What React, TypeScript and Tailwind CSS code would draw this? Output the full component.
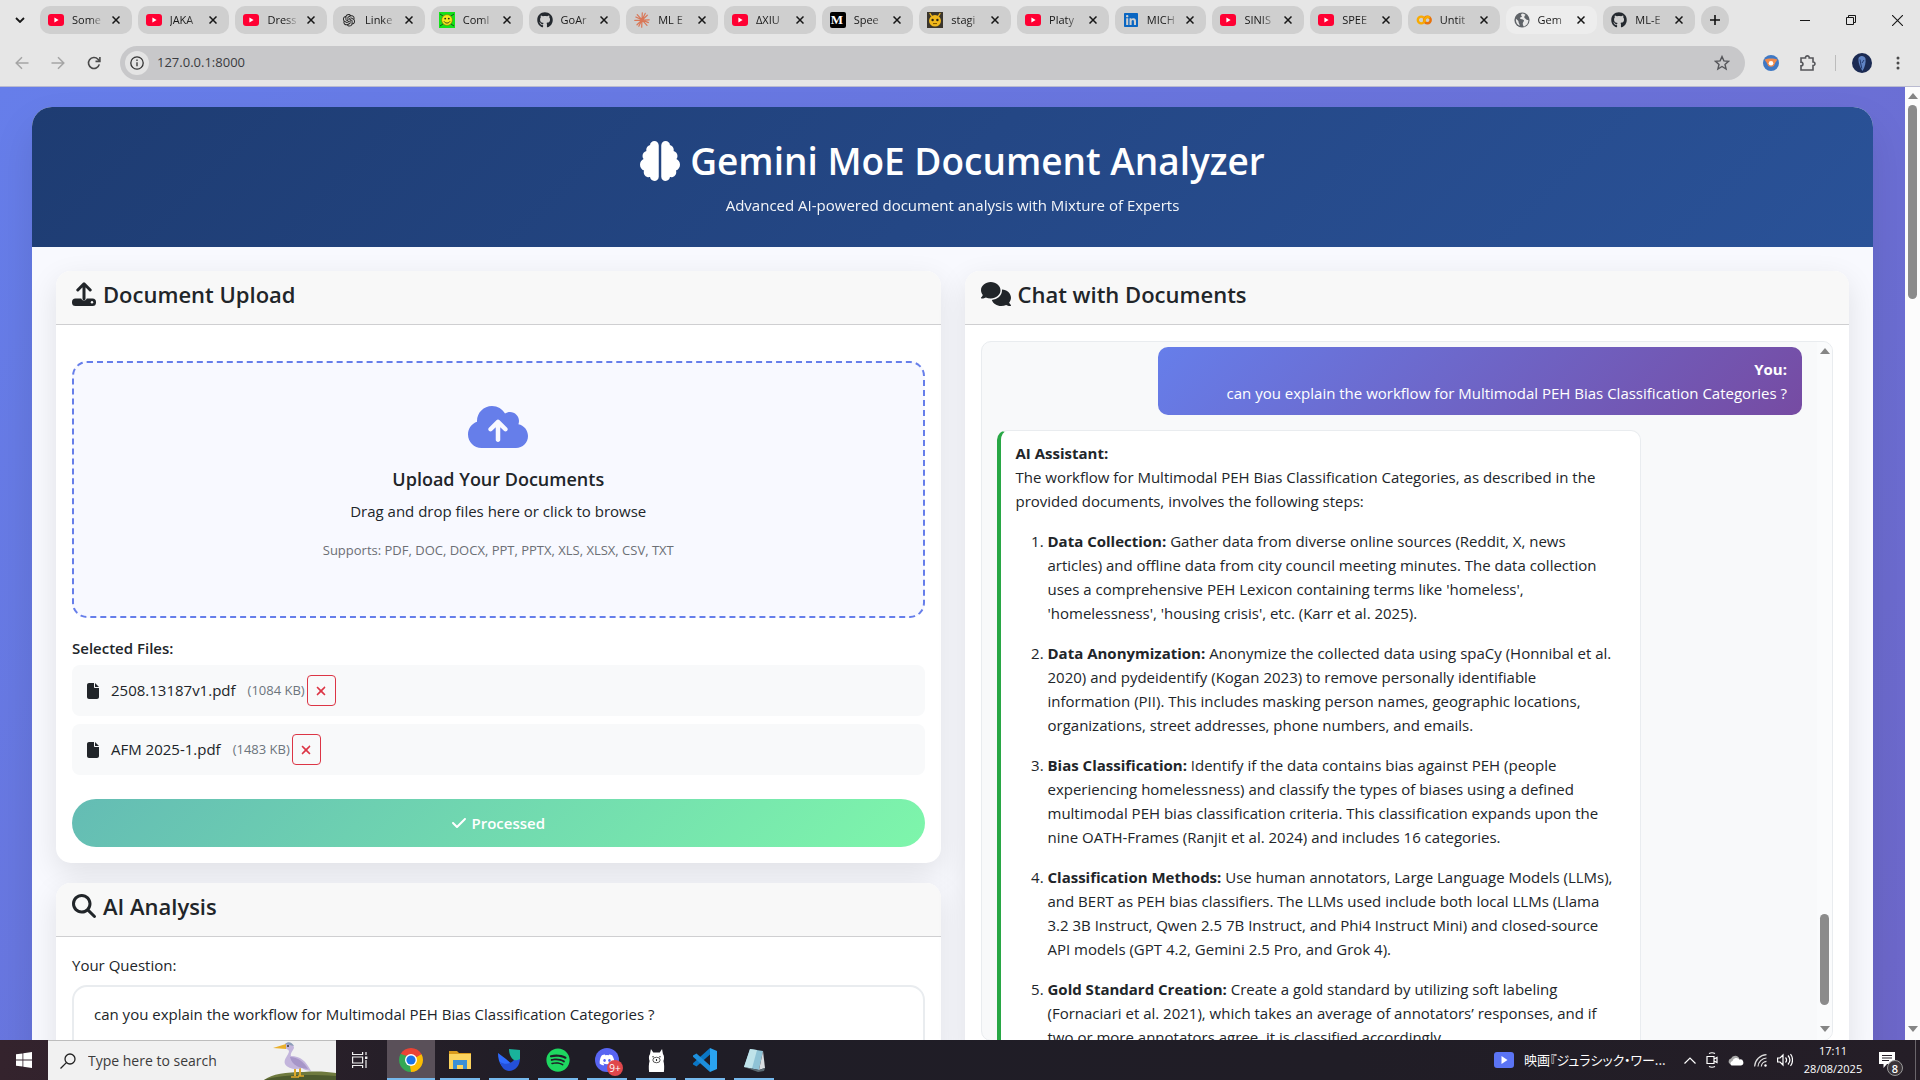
import type { ReactNode } from "react";
import {
  FaBrain,
  FaCheck,
  FaCloudArrowUp,
  FaComments,
  FaDiscord,
  FaFile,
  FaGithub,
  FaLinkedin,
  FaMagnifyingGlass,
  FaSpotify,
  FaXmark,
} from "react-icons/fa6";
import { AiOutlineOpenAI } from "react-icons/ai";

/* ---------- favicons ---------- */

const YouTube = () => (
  <svg viewBox="0 0 16 16" className="size-4">
    <rect x="0" y="2" width="16" height="12" rx="3" fill="#ff0033" />
    <path d="M6.4 5.6v4.8L10.6 8z" fill="#fff" />
  </svg>
);

const Smiley = () => (
  <svg viewBox="0 0 16 16" className="size-4">
    <rect width="16" height="16" fill="#14e21a" />
    <path d="M1 2l3 2M15 2l-3 2M1 14l3-2M15 14l-3-2" stroke="#222" strokeWidth="0.8" />
    <circle cx="8" cy="8" r="5.4" fill="#f6ea1c" stroke="#7a6a00" strokeWidth="0.6" />
    <circle cx="6.2" cy="6.6" r="0.9" fill="#222" />
    <circle cx="9.8" cy="6.6" r="0.9" fill="#222" />
    <path d="M5 9.4c1.4 2.2 4.600 2.200 6 0" fill="none" stroke="#222" strokeWidth="0.9" />
  </svg>
);

const Burst = () => (
  <svg viewBox="0 0 16 16" className="size-4" stroke="#d97757" strokeWidth="1.2" strokeLinecap="round">
    <path d="M8.300.8L7.700 15.200M.8 8.400l14.400-.6M3.200 2.600l9.800 10.800M13.300 3.200L3 12.800M4.800 14.200L11.200 1.400M1.800 5l12.600 5.600" />
  </svg>
);

const Medium = () => (
  <span className="flex size-4 items-center overflow-hidden rounded-xs bg-black pl-px font-['Liberation_Serif',serif] text-[13px] leading-4 font-bold text-white">
    M
  </span>
);

const Bee = () => (
  <svg viewBox="0 0 16 16" className="size-4">
    <rect width="16" height="16" fill="#3a352c" />
    <path d="M4.500 4L3 1.500M11.500 4L13 1.500" stroke="#f0b81c" strokeWidth="1.400" strokeLinecap="round" />
    <ellipse cx="8" cy="8.800" rx="6" ry="5.800" fill="#f0b81c" />
    <circle cx="5.600" cy="8" r="1.200" fill="#2a2417" />
    <circle cx="10.400" cy="8" r="1.200" fill="#2a2417" />
    <path d="M6 11.600h4" stroke="#7a5200" strokeWidth="1" />
  </svg>
);

const Colab = () => (
  <svg viewBox="0 0 16 16" className="size-4" fill="none" strokeWidth="2.400">
    <path d="M7.600 10.400A3.400 3.400 0 1 1 7.600 5.600" stroke="#f9ab00" />
    <circle cx="11.400" cy="8" r="3.300" stroke="#e8710a" />
    <path d="M9.100 10.300a3.300 3.300 0 0 1 4.600-4.600" stroke="#f9ab00" />
  </svg>
);

const Globe = () => (
  <svg viewBox="0 0 16 16" className="size-4">
    <circle cx="8" cy="8" r="7.600" fill="#5f6368" />
    <path d="M8.600 1.600c-1.600.4-2 1.600-1 2.400.8.7-.2 1.300-1.200 1.500-.9.200-.6 1.300.4 1.400 1.600.1 3 .5 3.200 1.700.2 1.100-1 1.400-1.200 2.600-.2 1.300.2 2.400 1 3.200 2.800-.6 4.700-3.300 4.600-6.400-1.200.3-2-.2-2.600-1.100-.6-.9-1.600-.8-1.500-1.900.1-1 .8-1.400 1.300-1.900-.7-.8-1.900-1.400-3-1.500zM2 6.800c-.5 3 .9 5.900 3.600 7 .2-1.200-.3-1.700-.7-2.600-.5-1.200-.2-2-1-2.800z" fill="#e8e8e8" />
  </svg>
);

const GitHub = () => <FaGithub className="size-4 text-[#24292f]" />;

type TabData = { label: string; icon: ReactNode; active?: boolean };

const tabs: TabData[] = [
  { label: "Some", icon: <YouTube /> },
  { label: "JAKA", icon: <YouTube /> },
  { label: "Dress", icon: <YouTube /> },
  { label: "Linke", icon: <AiOutlineOpenAI className="size-4 text-neutral-800" /> },
  { label: "Coml", icon: <Smiley /> },
  { label: "GoAr", icon: <GitHub /> },
  { label: "ML E", icon: <Burst /> },
  { label: "ΔXIU", icon: <YouTube /> },
  { label: "Spee", icon: <Medium /> },
  { label: "stagi", icon: <Bee /> },
  { label: "Platy", icon: <YouTube /> },
  { label: "MICH", icon: <FaLinkedin className="size-4 text-[#0a66c2]" /> },
  { label: "SINIS", icon: <YouTube /> },
  { label: "SPEE", icon: <YouTube /> },
  { label: "Untit", icon: <Colab /> },
  { label: "Gem", icon: <Globe />, active: true },
  { label: "ML-E", icon: <GitHub /> },
];

const Cross = ({ className = "size-2" }: { className?: string }) => (
  <svg viewBox="0 0 8 8" className={className} stroke="currentColor" strokeWidth="1.500" fill="none">
    <path d="M.5.5l7 7M7.500.5l-7 7" />
  </svg>
);

function Tab({ label, icon, active }: TabData) {
  return (
    <div className={`flex h-7 min-w-0 flex-1 items-center rounded-[10px] px-2 ${active ? "bg-[#ededed]" : "bg-[#cfcfcf]"}`}>
      <span className="flex size-4 shrink-0">{icon}</span>
      <span className="ml-2 w-8 text-[11px] whitespace-nowrap text-neutral-900 [mask-image:linear-gradient(to_right,black_55%,transparent)]">
        {label}
      </span>
      <button aria-label={`Close ${label}`} className="ml-auto flex size-4 shrink-0 items-center justify-center text-neutral-900">
        <Cross />
      </button>
    </div>
  );
}

function BrowserChrome() {
  return (
    <header className="shrink-0 border-b border-[#b9bad0] bg-[#e6e6e6]">
      <div className="flex h-10 items-center">
        <button aria-label="Search tabs" className="flex w-10 shrink-0 items-center justify-center text-neutral-900">
          <svg viewBox="0 0 10 6" className="h-[6px] w-[10px]" fill="none" stroke="currentColor" strokeWidth="1.800">
            <path d="M1 1l4 4 4-4" />
          </svg>
        </button>
        <nav aria-label="Tabs" className="flex max-w-[1655px] min-w-0 flex-1 gap-1.5">
          {tabs.map((t, i) => (
            <Tab key={i} {...t} />
          ))}
        </nav>
        <button aria-label="New tab" className="ml-1.5 flex size-7 shrink-0 items-center justify-center rounded-full bg-[#cfcfcf]">
          <svg viewBox="0 0 10 10" className="size-2.5" stroke="#111" strokeWidth="1.600">
            <path d="M5 0v10M0 5h10" />
          </svg>
        </button>
        <div className="ml-auto flex shrink-0 text-neutral-900">
          <button aria-label="Minimize" className="flex w-[46px] items-center justify-center">
            <svg viewBox="0 0 10 10" className="size-2.5" stroke="currentColor">
              <path d="M0 5.500h10" />
            </svg>
          </button>
          <button aria-label="Restore" className="flex w-[46px] items-center justify-center">
            <svg viewBox="0 0 10 10" className="size-2.5" stroke="currentColor" fill="none">
              <path d="M.5 2.500h7v7h-7zM2.500 2V.500h7v7H8" />
            </svg>
          </button>
          <button aria-label="Close window" className="flex w-[46px] items-center justify-center">
            <svg viewBox="0 0 10 10" className="size-[11px]" stroke="currentColor">
              <path d="M0 0l10 10M10 0L0 10" />
            </svg>
          </button>
        </div>
      </div>
      <div className="flex h-[46px] items-center">
        <div className="flex w-[120px] shrink-0 items-center justify-around pr-2 pl-1">
          <button aria-label="Back" className="text-[#a5a5a5]">
            <svg viewBox="0 0 14 14" className="size-3.5" fill="none" stroke="currentColor" strokeWidth="1.500">
              <path d="M13.500 7H1.500M7 1.200L1.200 7 7 12.800" />
            </svg>
          </button>
          <button aria-label="Forward" className="text-[#a5a5a5]">
            <svg viewBox="0 0 14 14" className="size-3.5" fill="none" stroke="currentColor" strokeWidth="1.500">
              <path d="M.5 7h12M7 1.200L12.800 7 7 12.800" />
            </svg>
          </button>
          <button aria-label="Reload" className="text-[#4a4a4a]">
            <svg viewBox="0 0 14 14" className="size-3.5" fill="none" stroke="currentColor" strokeWidth="1.600">
              <path d="M12.300 8.400A5.500 5.500 0 1 1 11 3.200L12.500 5" />
              <path d="M12.900 1v4.400H8.500" />
            </svg>
          </button>
        </div>
        <div className="flex h-[34px] flex-1 items-center rounded-full bg-[#c8c8ca] px-[5px]">
          <span className="flex size-6 items-center justify-center rounded-full bg-[#e4e4e4]">
            <svg viewBox="0 0 14 14" className="size-3.5" fill="none" stroke="#333" strokeWidth="1.300">
              <circle cx="7" cy="7" r="6.200" />
              <path d="M7 6.200v4M7 3.600v1.400" />
            </svg>
          </span>
          <input
            aria-label="Address"
            defaultValue="127.0.0.1:8000"
            className="ml-2 min-w-0 flex-1 bg-transparent text-[13px] text-[#3a3b40] outline-none"
          />
          <button aria-label="Bookmark this page" className="mr-2.5">
            <svg viewBox="0 0 16 16" className="size-4" fill="none" stroke="#55565a" strokeWidth="1.400">
              <path d="M8 1.600l1.900 4.300 4.600.4-3.500 3.100 1.100 4.600L8 11.500 3.900 14 5 9.400 1.500 6.300l4.600-.4z" />
            </svg>
          </button>
        </div>
        <div className="flex items-center pl-[18px]">
          <button aria-label="Extension">
            <svg viewBox="0 0 16 16" className="size-4">
              <circle cx="8" cy="8" r="8" fill="#3f78c4" />
              <path d="M1.500 4.500c3-1.500 10-1.500 13 0L10.800 10H5.200z" fill="#f08a4b" />
              <circle cx="8" cy="8.200" r="3.600" fill="#f08a4b" />
              <circle cx="8" cy="8.200" r="2.300" fill="#fff" />
            </svg>
          </button>
          <button aria-label="Extensions" className="ml-5">
            <svg viewBox="0 0 18 18" className="size-[18px]" fill="none" stroke="#55565a" strokeWidth="1.600">
              <path d="M2 4h4.500c-.3-2.800 4-2.800 3.700 0H14v4c2.600-.2 2.600 3.700 0 3.500V16H2v-4.200c2.600 0 2.600-3.700 0-3.700z" />
            </svg>
          </button>
          <span className="ml-[18px] h-4 w-px bg-[#bcbcbc]" />
          <button aria-label="Profile" className="ml-4">
            <svg viewBox="0 0 20 20" className="size-5">
              <circle cx="10" cy="10" r="10" fill="#1b2a52" />
              <path d="M6.500 5c2-3 6-2.500 7 .500.6 3.500-.6 9-3 12.500C8 14.500 6 9 6.500 5z" fill="#5f83c4" />
              <path d="M8 6.500c.8 3 .8 6 1.800 9M12 7l-2 3" stroke="#24386c" strokeWidth="1" fill="none" />
            </svg>
          </button>
          <button aria-label="Menu" className="mr-5 ml-6">
            <svg viewBox="0 0 4 16" className="h-4 w-1" fill="#4a4a4a">
              <circle cx="2" cy="3" r="1.500" />
              <circle cx="2" cy="8" r="1.500" />
              <circle cx="2" cy="13" r="1.500" />
            </svg>
          </button>
        </div>
      </div>
    </header>
  );
}

/* ---------- scrollbars ---------- */

const Arrow = ({ down }: { down?: boolean }) => (
  <svg viewBox="0 0 10 6" className="h-1.5 w-2.5 shrink-0" fill="#858585">
    <path d={down ? "M0 0h10L5 6z" : "M0 6h10L5 0z"} />
  </svg>
);

/* ---------- page ---------- */

const UploadIcon = () => (
  <svg viewBox="0 0 24 24" className="size-6" fill="none" stroke="currentColor">
    <path d="M3.500 16.500h5.700a2.900 2.900 0 0 0 5.600 0h5.700a3.500 3.500 0 0 1 3.500 3.500v.5a3.500 3.500 0 0 1-3.500 3.500h-17A3.500 3.500 0 0 1 0 20.500V20a3.500 3.500 0 0 1 3.500-3.500z" fill="currentColor" stroke="none" />
    <circle cx="20" cy="20.300" r="1.200" fill="#f8f8f8" stroke="none" />
    <path d="M12 17V2.500M5.800 8L12 1.800 18.200 8" strokeWidth="3" strokeLinecap="round" strokeLinejoin="round" />
  </svg>
);

function Card({ icon, title, children }: { icon: ReactNode; title: string; children: ReactNode }) {
  return (
    <section className="rounded-[15px] bg-white shadow-[0_10px_30px_rgba(0,0,0,0.1)]">
      <div className="flex h-[54px] items-start rounded-t-[15px] border-b border-[#cfcfd1] bg-[#f8f8f8] px-4 pt-2">
        <h2 className="flex items-center gap-[7px] text-[22px] leading-[30px] font-semibold text-[#212529]">
          {icon}
          {title}
        </h2>
      </div>
      <div className="p-4">{children}</div>
    </section>
  );
}

const files = [
  { name: "2508.13187v1.pdf", size: "(1084 KB)" },
  { name: "AFM 2025-1.pdf", size: "(1483 KB)" },
];

function UploadCard() {
  return (
    <Card icon={<UploadIcon />} title="Document Upload">
      <button className="mt-5 mb-5 flex h-[257px] w-full flex-col items-center rounded-[15px] border-2 border-dashed border-[#667eea] bg-[#f8f9ff] pt-10">
        <FaCloudArrowUp className="h-12 w-[60px] text-[#667eea]" />
        <span className="mt-4 text-[18px] leading-6 font-semibold">Upload Your Documents</span>
        <span className="mt-2 text-[15px] leading-6">Drag and drop files here or click to browse</span>
        <span className="mt-4 text-[13px] leading-[22px] text-[#6c6f75]">
          Supports: PDF, DOC, DOCX, PPT, PPTX, XLS, XLSX, CSV, TXT
        </span>
      </button>
      <h3 className="mb-[7px] text-[15px] leading-5 font-semibold">Selected Files:</h3>
      <ul className="flex flex-col gap-2">
        {files.map((f) => (
          <li key={f.name} className="flex h-[51px] items-center rounded-lg bg-[#f8f9fa] pl-[15px]">
            <FaFile className="h-4 w-3" />
            <span className="ml-3 text-[15px]">{f.name}</span>
            <span className="ml-3 text-[13px] text-[#6c757d]">{f.size}</span>
            <button
              aria-label={`Remove ${f.name}`}
              className="ml-0.5 flex h-[31px] w-[29px] items-center justify-center rounded-sm border border-[#dc3545] text-[#dc3545]"
            >
              <FaXmark className="size-3.5" />
            </button>
          </li>
        ))}
      </ul>
      <button className="mt-6 flex h-12 w-full items-center justify-center gap-1 rounded-full bg-[linear-gradient(135deg,#64bcb4,#7ef6ab)] text-[15px] font-semibold text-white">
        <FaCheck className="size-4" />
        Processed
      </button>
    </Card>
  );
}

function AnalysisCard() {
  return (
    <Card icon={<FaMagnifyingGlass className="size-6" />} title="AI Analysis">
      <label htmlFor="question" className="mb-2 block text-[15px] leading-6">
        Your Question:
      </label>
      <textarea
        id="question"
        rows={4}
        defaultValue="can you explain the workflow for Multimodal PEH Bias Classification Categories ?"
        className="block w-full resize-none rounded-[15px] border-2 border-[#e9ecef] bg-white px-5 py-[15px] text-[15px] leading-6 outline-none"
      />
    </Card>
  );
}

const steps: { term: string; lines: string[] }[] = [
  {
    term: "Data Collection:",
    lines: [
      "Gather data from diverse online sources (Reddit, X, news",
      "articles) and offline data from city council meeting minutes. The data collection",
      "uses a comprehensive PEH Lexicon containing terms like 'homeless',",
      "'homelessness', 'housing crisis', etc. (Karr et al. 2025).",
    ],
  },
  {
    term: "Data Anonymization:",
    lines: [
      "Anonymize the collected data using spaCy (Honnibal et al.",
      "2020) and pydeidentify (Kogan 2023) to remove personally identifiable",
      "information (PII). This includes masking person names, geographic locations,",
      "organizations, street addresses, phone numbers, and emails.",
    ],
  },
  {
    term: "Bias Classification:",
    lines: [
      "Identify if the data contains bias against PEH (people",
      "experiencing homelessness) and classify the types of biases using a defined",
      "multimodal PEH bias classification criteria. This classification expands upon the",
      "nine OATH-Frames (Ranjit et al. 2024) and includes 16 categories.",
    ],
  },
  {
    term: "Classification Methods:",
    lines: [
      "Use human annotators, Large Language Models (LLMs),",
      "and BERT as PEH bias classifiers. The LLMs used include both local LLMs (Llama",
      "3.2 3B Instruct, Qwen 2.5 7B Instruct, and Phi4 Instruct Mini) and closed-source",
      "API models (GPT 4.2, Gemini 2.5 Pro, and Grok 4).",
    ],
  },
  {
    term: "Gold Standard Creation:",
    lines: [
      "Create a gold standard by utilizing soft labeling",
      "(Fornaciari et al. 2021), which takes an average of annotators’ responses, and if",
      "two or more annotators agree, it is classified accordingly.",
    ],
  },
];

function ChatCard() {
  return (
    <Card icon={<FaComments className="h-6 w-[30px]" />} title="Chat with Documents">
      <div className="flex h-[700px] overflow-hidden rounded-[10px] border border-[#e9ecef] bg-[#f8f9fa]">
        <div className="flex min-w-0 flex-1 flex-col gap-[15px] overflow-hidden px-[15px] pt-[5px] text-[15px] leading-6">
          <div className="flex h-[68px] w-4/5 shrink-0 flex-col justify-center self-end rounded-[10px] bg-[linear-gradient(135deg,#667eea,#764ba2)] px-[15px] text-right text-white">
            <strong className="font-bold">You:</strong>
            <span>can you explain the workflow for Multimodal PEH Bias Classification Categories ?</span>
          </div>
          <div className="w-4/5 shrink-0 rounded-[10px] border border-l-4 border-[#e9ecef] border-l-[#28a745] bg-white px-[15px] py-2.5 whitespace-nowrap">
            <strong className="font-bold">AI Assistant:</strong>
            <p>
              The workflow for Multimodal PEH Bias Classification Categories, as described in the
              <br />
              provided documents, involves the following steps:
            </p>
            <ol className="mt-4 flex list-decimal flex-col gap-4 pl-8">
              {steps.map((s) => (
                <li key={s.term}>
                  <strong className="font-bold">{s.term}</strong>{" "}
                  {s.lines.map((l, i) => (
                    <span key={l}>
                      {i > 0 && <br />}
                      {l}
                    </span>
                  ))}
                </li>
              ))}
            </ol>
          </div>
        </div>
        <div className="flex w-[15px] shrink-0 flex-col items-center bg-[#fafbfc] pt-1.5 pb-2">
          <Arrow />
          <span className="mt-auto h-[91px] w-[9px] rounded-full bg-[#8b8b8b]" />
          <span className="h-[21px]" />
          <Arrow down />
        </div>
      </div>
    </Card>
  );
}

/* ---------- taskbar ---------- */

const ChromeLogo = () => (
  <svg viewBox="0 0 24 24" className="size-6">
    <path d="M12 12L1.610 6A12 12 0 0 1 22.390 6z" fill="#ea4335" />
    <path d="M12 12L22.390 6A12 12 0 0 1 12 24z" fill="#fbbc04" />
    <path d="M12 12v12A12 12 0 0 1 1.610 6z" fill="#34a853" />
    <path d="M12 6h10.390L17.200 9z" fill="#ea4335" />
    <path d="M17.200 15L12 24l-1-6z" fill="#fbbc04" />
    <path d="M6.800 15L1.610 6 8 8z" fill="#34a853" />
    <circle cx="12" cy="12" r="6" fill="#fff" />
    <circle cx="12" cy="12" r="4.600" fill="#1a73e8" />
  </svg>
);

const Explorer = () => (
  <svg viewBox="0 0 24 24" className="size-6">
    <path d="M1 3h8l2 2h12v4H1z" fill="#d99a1c" />
    <path d="M1 6h22v15H1z" fill="#fbd35e" />
    <path d="M5 12h14v9h-4v-4H9v4H5z" fill="#3b8fd6" />
  </svg>
);

const Wave = () => (
  <svg viewBox="0 0 24 24" className="size-6">
    <path d="M1 5l8 6 8 7c-3 4-9 4-12 0C2 15 1 10 1 5z" fill="#2f6bff" />
    <path d="M3 14c5 3 11 2 14-2l6-2c0 8-5 13-11 13-4 0-8-4-9-9z" fill="#2450d8" />
    <path d="M12 1c4 0 8 1 11 1v9c-3 2-6 1-6 1-3-2-5-6-5-11z" fill="#19b39b" />
  </svg>
);

const Discord = () => (
  <span className="relative flex size-6 items-center justify-center rounded-full bg-[#5865f2]">
    <FaDiscord className="size-4 text-white" />
    <span className="absolute -right-1 -bottom-1 flex size-4 items-center justify-center rounded-full bg-[#e0474c] text-[10px] leading-none text-white">
      9+
    </span>
  </span>
);

const Llama = () => (
  <svg viewBox="0 0 18 26" className="h-6 w-[17px]">
    <path d="M3 1l2.500 4h7L15 1l1 5.500c1.500 2 1.500 5 .500 7.500 1 3 1 8 .500 12H1c-.500-4-.500-9 .500-12-1-2.500-1-5.500.500-7.500z" fill="#fff" />
    <ellipse cx="9" cy="13" rx="4" ry="3" fill="none" stroke="#222" strokeWidth="0.800" />
    <path d="M9 12v2M4.500 9.500h1.500M12 9.500h1.500" stroke="#222" strokeWidth="1.200" />
  </svg>
);

const VSCode = () => (
  <svg viewBox="0 0 24 24" className="size-6">
    <path d="M17 0l7 3v18l-7 3z" fill="#2aa3ef" />
    <path d="M17 0v6.500L3.500 18.500 0 16.500v-1.200z" fill="#0b76c4" />
    <path d="M17 24v-6.500L3.500 5.500 0 7.500v1.200z" fill="#1d8fdc" />
  </svg>
);

const Notepad = () => (
  <svg viewBox="0 0 24 24" className="size-6">
    <path d="M8 1l13 2-4 19-15-3z" fill="#8fc3d6" />
    <path d="M8 1l7 1-5 18.500-8-1.500z" fill="#bfe3ea" />
    <path d="M21 3l2 17-6 2z" fill="#d8dde0" />
    <path d="M2 19l15 3 6-2-1 3-6 1z" fill="#5b6a72" />
  </svg>
);

const apps = [
  { name: "File Explorer", icon: <Explorer /> },
  { name: "Wave", icon: <Wave /> },
  { name: "Spotify", icon: <FaSpotify className="size-6 text-[#1ed760]" /> },
  { name: "Discord", icon: <Discord /> },
  { name: "Ollama", icon: <Llama /> },
  { name: "Visual Studio Code", icon: <VSCode /> },
  { name: "Notepad", icon: <Notepad /> },
];

const Heron = () => (
  <svg viewBox="0 0 72 39" className="h-full w-[72px] self-end">
    <path d="M0 39c8-6 22-8 40-8 14-1 24 0 32 1v7z" fill="#6f7a3e" />
    <path d="M0 39c14-5 40-6 72-4v4z" fill="#4d5a2e" />
    <path d="M31 26v9M36 27v8" stroke="#e0a92a" strokeWidth="2" />
    <path d="M27 36h8M34 35h6" stroke="#e0a92a" strokeWidth="1.500" />
    <path d="M21 3c4-2 9 0 9 4-1 3-4 5-3 8 9 0 15 5 20 15-4-1-7-1-9-3-6 2-14 1-17-4-2-5 4-9 4-13-1-2-3-2-4-3z" fill="#c3b5dc" />
    <path d="M26 16c8 0 14 5 18 12-8-1-16-3-18-12z" fill="#a796c8" />
    <path d="M22 3L9 7l13 1z" fill="#eab02c" />
    <path d="M21 3c3-3 7-2 9 2z" fill="#8c9db8" />
    <circle cx="24" cy="5" r="1" fill="#333" />
  </svg>
);

function Taskbar() {
  return (
    <footer className="flex h-10 shrink-0 items-stretch bg-[linear-gradient(to_right,#34232d,#1f1d26_30%,#201d26_70%,#251e27)] text-white">
      <button aria-label="Start" className="flex w-12 items-center justify-center">
        <svg viewBox="0 0 16 16" className="size-4" fill="#fff">
          <path d="M0 2.300l6.500-.9v6.200H0zM7.300 1.300L16 0v7.600H7.300zM0 8.400h6.500v6.200L0 13.700zM7.300 8.400H16V16l-8.700-1.300z" />
        </svg>
      </button>
      <div className="flex w-72 items-center border-t border-[#bdbdbd] bg-[#f1f1f1] pl-3">
        <svg viewBox="0 0 16 16" className="size-4" fill="none" stroke="#222" strokeWidth="1.300">
          <circle cx="10" cy="6" r="5" />
          <path d="M6.400 9.600L.5 15.500" />
        </svg>
        <input
          aria-label="Search"
          placeholder="Type here to search"
          className="ml-3 min-w-0 flex-1 bg-transparent text-sm text-neutral-800 outline-none placeholder:text-[#3b3b3b]"
        />
        <Heron />
      </div>
      <button aria-label="Task view" className="flex w-[51px] items-center justify-center pr-1">
        <svg viewBox="0 0 16 16" className="size-4" fill="none" stroke="#eee" strokeWidth="1.200">
          <path d="M.6 0v2.500h10V0M.6 16v-2.500h10V16M.6 5h10v6h-10zM14 0v3M14 8v8" />
          <path d="M13 4.500h2.400V7H13z" fill="#eee" stroke="none" />
        </svg>
      </button>
      <button aria-label="Google Chrome" className="flex w-12 items-center justify-center border-b-2 border-[#76b9ed] bg-[#5a5059] pt-0.5">
        <ChromeLogo />
      </button>
      <div className="ml-[5px] flex gap-[9px]">
        {apps.map((a) => (
          <button key={a.name} aria-label={a.name} className="flex w-10 items-center justify-center border-b-2 border-[#76b9ed] pt-0.5">
            {a.icon}
          </button>
        ))}
      </div>
      <div className="ml-auto flex items-center">
        <button className="flex items-center gap-2.5 font-['Noto_Sans_CJK_JP',sans-serif] text-[13px]">
          <svg viewBox="0 0 20 16" className="h-4 w-5">
            <rect width="20" height="16" rx="3" fill="#5b74f4" />
            <path d="M7.500 4v8l6-4z" fill="#fff" />
          </svg>
          <span className="min-w-36 text-left whitespace-nowrap [font-feature-settings:'palt']">映画『ジュラシック・ワー...</span>
        </button>
        <div className="ml-4 flex items-center gap-2.5">
          <svg viewBox="0 0 12 7" className="h-[7px] w-3" fill="none" stroke="#fff" strokeWidth="1.200">
            <path d="M.5 6.500L6 1l5.500 5.500" />
          </svg>
          <svg viewBox="0 0 12 16" className="h-4 w-3" fill="none" stroke="#fff" strokeWidth="1.200">
            <path d="M3 1.500c2-1 4-1 6 0M3 14.500c2 1 4 1 6 0M1 4.500h7v7H1zM8 7l3-1.500v5L8 9" />
          </svg>
          <svg viewBox="0 0 16 11" className="h-[11px] w-4">
            <path d="M2 9a3 3 0 0 1 1-5.500A4.500 4.500 0 0 1 11.500 4L4 10z" fill="#a9a9a9" />
            <path d="M3.500 10.500a2.500 2.500 0 0 1 1-4.500 4 4 0 0 1 7-1.500 3 3 0 0 1 1.500 6z" fill="#fff" />
          </svg>
          <svg viewBox="0 0 13 13" className="size-[13px]" fill="none" stroke="#ddd" strokeWidth="1.200">
            <path d="M.6 12.500C1 6 6 1 12.500.6M4 12.500C4.300 8 8 4.300 12.500 4M7.300 12.500c.2-2.700 2.500-5 5.200-5.200" />
            <circle cx="11.500" cy="11.500" r="1.200" fill="#fff" stroke="none" />
          </svg>
          <svg viewBox="0 0 16 14" className="h-3.5 w-4" fill="none" stroke="#fff" strokeWidth="1.200">
            <path d="M.6 5v4h2.400l3 3V2L3 5zM8.500 4.500c1.300 1.500 1.300 3.500 0 5M11 2.500c2.300 2.700 2.300 6.300 0 9M13.500 1c2.700 3.500 2.700 8.500 0 12" />
          </svg>
        </div>
        <div className="ml-2.5 flex w-[60px] flex-col text-center text-[11px] leading-[18px] whitespace-nowrap">
          <time>17:11</time>
          <time>28/08/2025</time>
        </div>
        <button aria-label="Notifications" className="relative mr-5 ml-4">
          <svg viewBox="0 0 16 16" className="size-4">
            <path d="M0 0h16v12H8l-3.500 4v-4H0z" fill="#fff" />
            <path d="M3 3.500h10M3 6h10M3 8.500h7" stroke="#251e27" strokeWidth="1" />
          </svg>
          <span className="absolute top-2 left-2 flex size-4 items-center justify-center rounded-full border border-[#9a9a9a] bg-[#3a3439] text-[11px] leading-none font-semibold">
            8
          </span>
        </button>
        <span className="mr-1 h-10 w-px bg-[#6a656b]" />
      </div>
    </footer>
  );
}

export default function App() {
  return (
    <div className="flex h-screen flex-col overflow-hidden font-['Open_Sans','Noto_Sans_CJK_JP',sans-serif] text-[#212529]">
      <BrowserChrome />
      <div className="flex min-h-0 flex-1">
        <main className="min-w-0 flex-1 overflow-hidden bg-[linear-gradient(135deg,#667eea,#764ba2)] bg-[length:100%_4500px] px-8 pt-5">
          <div className="overflow-hidden rounded-t-[20px] bg-[#f8f9fe] shadow-[0_20px_40px_rgba(0,0,0,0.1)]">
            <header className="flex flex-col items-center bg-[linear-gradient(135deg,#1e3c72,#2a5298)] py-[30px] text-white">
              <h1 className="flex items-center gap-2.5 text-[37px] leading-[48px] font-semibold">
                <FaBrain className="size-10" />
                Gemini MoE Document Analyzer
              </h1>
              <p className="mt-2 text-[15px] leading-6 opacity-95">
                Advanced AI-powered document analysis with Mixture of Experts
              </p>
            </header>
            <div className="grid grid-cols-2 items-start gap-6 p-6">
              <div className="flex flex-col gap-5">
                <UploadCard />
                <AnalysisCard />
              </div>
              <ChatCard />
            </div>
          </div>
        </main>
        <div className="flex w-[15px] shrink-0 flex-col items-center bg-[#fcfcfc] pt-1.5 pb-2">
          <Arrow />
          <span className="mt-1.5 h-[194px] w-[9px] rounded-full bg-[#8b8b8b]" />
          <span className="flex-1" />
          <Arrow down />
        </div>
      </div>
      <Taskbar />
    </div>
  );
}
